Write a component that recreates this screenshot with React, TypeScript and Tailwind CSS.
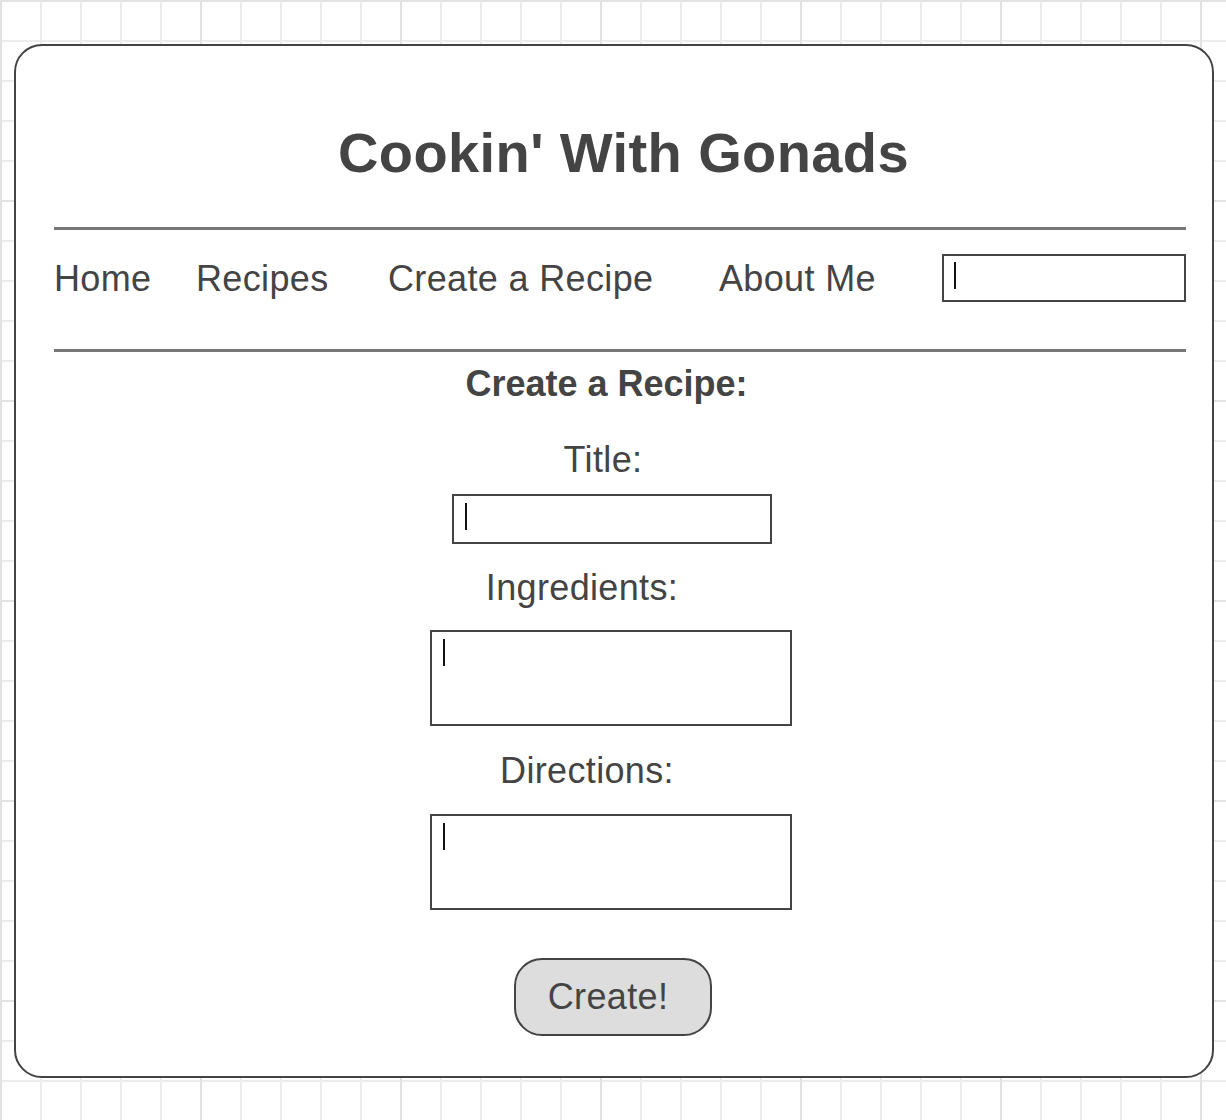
const Caret = () => <span className="block w-[2px] h-[27px] bg-[#111]" />;

const InputBox = ({ className }: { className: string }) => (
    <div className={`border-2 border-[#444] bg-white pl-[11px] pt-[7px] ${className}`}>
        <Caret />
    </div>
);

const App = () => {
    const navItems = [
        { label: 'Home', width: 'w-[142px]' },
        { label: 'Recipes', width: 'w-[192px]' },
        { label: 'Create a Recipe', width: 'w-[331px]' },
        { label: 'About Me', width: 'w-[223px]' }
    ];

    return (
        <div className="min-h-[1120px] w-full pt-[44px] pl-[14px] font-['Liberation_Sans',Arial,sans-serif] text-[#444] tracking-[0.35px] [background-color:#fff] [background-image:linear-gradient(to_right,#e2e2e2_2px,transparent_2px),linear-gradient(to_bottom,#e2e2e2_2px,transparent_2px),linear-gradient(to_right,#ececec_2px,transparent_2px),linear-gradient(to_bottom,#ececec_2px,transparent_2px)] [background-size:200px_200px,200px_200px,40px_40px,40px_40px]">
            {/* Card */}
            <div className="w-[1200px] h-[1034px] bg-white border-2 border-[#444] rounded-[28px] pl-[38px]">
                <div className="w-[1132px]">
                    {/* Header */}
                    <h1 className="pt-[75px] h-[139px] pl-[7px] text-center text-[56px] leading-[64px] font-bold tracking-[0.4px]">
                        Cookin' With Gonads
                    </h1>
                    <div className="mt-[42px] h-[3px] bg-[#777]" />

                    {/* Nav */}
                    <nav className="mt-[24px] h-[48px] flex">
                        {navItems.map((item, index) => (
                            <a key={index} className={`${item.width} text-[36px] leading-[50px] whitespace-nowrap`}>
                                {item.label}
                            </a>
                        ))}
                        <div className="w-[244px] h-[48px] border-2 border-[#444] pl-[10px] pt-[6px]">
                            <Caret />
                        </div>
                    </nav>
                    <div className="mt-[47px] h-[3px] bg-[#777]" />

                    {/* Form */}
                    <div className="flex flex-col items-center">
                        <h2 className="mt-[12px] mr-[27px] text-[36px] leading-[40px] font-bold tracking-normal">Create a Recipe:</h2>
                        <label className="mt-[36px] mr-[34px] text-[36px] leading-[40px]">Title:</label>
                        <InputBox className="mt-[14px] mr-[16px] w-[320px] h-[50px]" />
                        <label className="mt-[24px] mr-[76px] text-[36px] leading-[40px]">Ingredients:</label>
                        <InputBox className="mt-[22px] mr-[18px] w-[362px] h-[96px]" />
                        <label className="mt-[25px] mr-[66px] text-[36px] leading-[40px]">Directions:</label>
                        <InputBox className="mt-[23px] mr-[18px] w-[362px] h-[96px]" />
                        <button className="mt-[48px] mr-[14px] w-[198px] h-[78px] bg-[#ddd] border-2 border-[#444] rounded-[28px] flex items-center justify-center pr-[10px] text-[36px] leading-[40px] text-[#444]">
                            Create!
                        </button>
                    </div>
                </div>
            </div>
        </div>
    );
};

export default App;
